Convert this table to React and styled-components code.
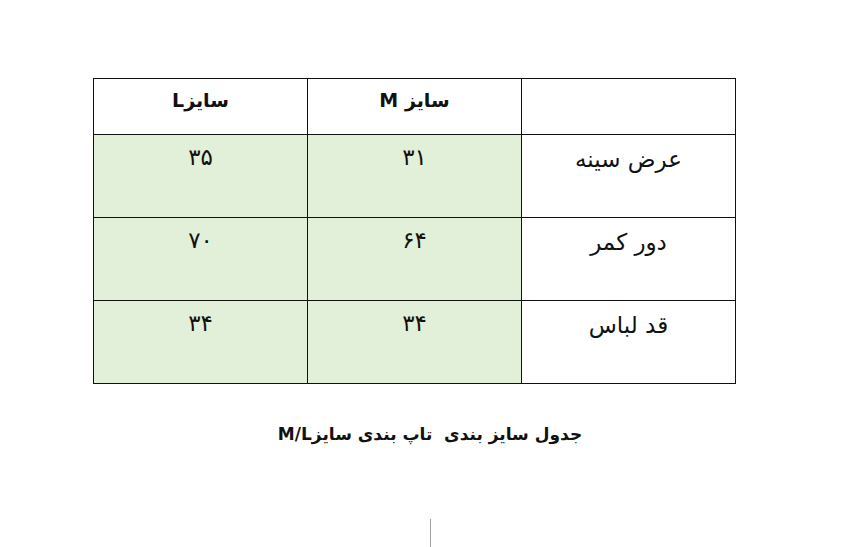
import React from 'react'
import styled, { createGlobalStyle } from 'styled-components'

const rows = [
  { label: 'عرض سینه', m: '۳۱', l: '۳۵' },
  { label: 'دور کمر', m: '۶۴', l: '۷۰' },
  { label: 'قد لباس', m: '۳۴', l: '۳۴' }
]

export default function App() {
  return (
    <Page>
      <GlobalStyle />
      <SizeTable dir="rtl">
        <thead>
          <tr>
            <HeadCell />
            <HeadCell>سایز M</HeadCell>
            <HeadCell>سایزL</HeadCell>
          </tr>
        </thead>
        <tbody>
          {rows.map(row => (
            <tr key={row.label}>
              <LabelCell>{row.label}</LabelCell>
              <ValueCell>{row.m}</ValueCell>
              <ValueCell>{row.l}</ValueCell>
            </tr>
          ))}
        </tbody>
      </SizeTable>
      <Caption dir="rtl">جدول سایز بندی&nbsp; تاپ بندی سایزM/L</Caption>
      <Cursor />
    </Page>
  )
}

const GlobalStyle = createGlobalStyle`
  html, body {
    margin: 0;
    padding: 0;
    background: #ffffff;
  }
  body {
    font-family: "DejaVu Sans", "Noto Sans", sans-serif;
    color: #111;
  }
`

const Page = styled.div`
  width: 865px;
  height: 547px;
  overflow: hidden;
  display: flex;
  flex-direction: column;
  align-items: flex-start;
  padding-top: 78px;
  box-sizing: border-box;
`

const SizeTable = styled.table`
  border-collapse: collapse;
  width: 643px;
  margin-left: 93px;
  table-layout: fixed;
`

const Cell = styled.td`
  border: 1px solid #111;
  width: 214px;
  text-align: center;
  vertical-align: top;
  box-sizing: border-box;
  padding: 0;
`

const HeadCell = styled(Cell).attrs({ as: 'th' })`
  height: 56px;
  font-size: 19px;
  font-weight: bold;
  line-height: 22px;
  padding-top: 10px;
  background: #ffffff;
`

const LabelCell = styled(Cell)`
  height: 83px;
  font-size: 23px;
  line-height: 26px;
  padding-top: 11px;
  background: #ffffff;
`

const ValueCell = styled(Cell)`
  height: 83px;
  font-size: 23px;
  line-height: 24px;
  padding-top: 10px;
  background: #e2efd9;
`

const Caption = styled.div`
  width: 860px;
  text-align: center;
  margin-top: 40px;
  font-size: 17px;
  font-weight: bold;
  line-height: 20px;
`

const Cursor = styled.div`
  margin-top: 75px;
  margin-left: 430px;
  width: 1px;
  height: 28px;
  background: #a0a0a0;
`
